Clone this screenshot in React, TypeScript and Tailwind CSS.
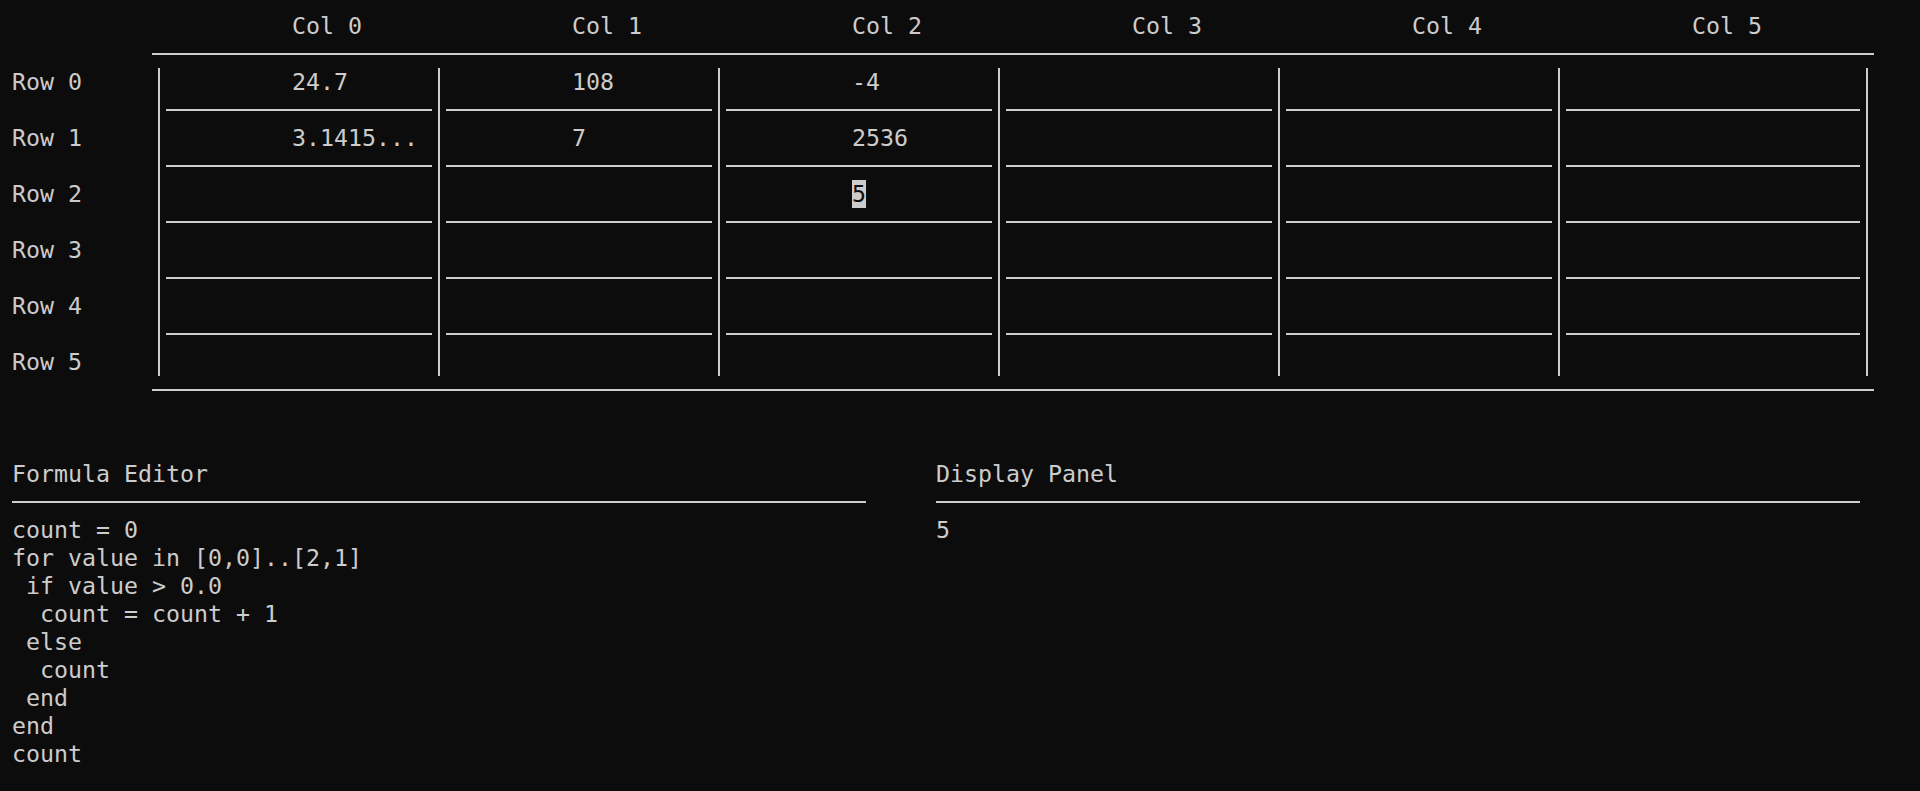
import React from "react";

const HLine = ({ w }: { w: string }) => (
  <div className={`${w} h-[28px] flex items-center shrink-0`}>
    <div className="h-[2px] w-full bg-[#cccccc]" />
  </div>
);

const VBar = () => (
  <div className="w-[14px] h-[28px] flex justify-center shrink-0">
    <div className="w-[2px] h-full bg-[#cccccc]" />
  </div>
);

const values: string[][] = [
  ["24.7", "108", "-4", "", "", ""],
  ["3.1415...", "7", "2536", "", "", ""],
  ["", "", "5", "", "", ""],
  ["", "", "", "", "", ""],
  ["", "", "", "", "", ""],
  ["", "", "", "", "", ""],
];

const code = [
  "count = 0",
  "for value in [0,0]..[2,1]",
  " if value > 0.0",
  "  count = count + 1",
  " else",
  "  count",
  " end",
  "end",
  "count",
];

function DataRow({ r }: { r: number }) {
  return (
    <div className="flex h-[28px]">
      <div className="w-[140px] shrink-0 whitespace-pre">{`Row ${r}`}</div>
      {values[r].map((v, c) => (
        <React.Fragment key={c}>
          <VBar />
          <div
            className={`${c === 5 ? "w-[294px]" : "w-[266px]"} shrink-0 pl-[126px] h-[28px] whitespace-pre`}
          >
            {r === 2 && c === 2 ? (
              <span className="inline-block h-[28px] bg-[#cccccc] text-[#0c0c0c]">{v}</span>
            ) : (
              v
            )}
          </div>
        </React.Fragment>
      ))}
      <VBar />
    </div>
  );
}

function SepRow() {
  return (
    <div className="flex h-[28px]">
      <div className="w-[140px] shrink-0" />
      {[0, 1, 2, 3, 4, 5].map((c) => (
        <React.Fragment key={c}>
          <VBar />
          <HLine w={c === 5 ? "w-[294px]" : "w-[266px]"} />
        </React.Fragment>
      ))}
      <VBar />
    </div>
  );
}

export default function App() {
  return (
    <div className="min-h-screen w-full bg-[#0c0c0c] text-[#cccccc] font-['DejaVu_Sans_Mono','Liberation_Mono',monospace] text-[23.25px] leading-[28px] pl-[12px] pt-[11.5px] overflow-hidden">
      {/* Header */}
      <div className="flex h-[28px] pl-[280px]">
        {[0, 1, 2, 3, 4, 5].map((c) => (
          <div key={c} className="w-[280px] shrink-0 whitespace-pre">{`Col ${c}`}</div>
        ))}
      </div>
      <div className="flex pl-[140px]">
        <HLine w="w-[1722px]" />
      </div>
      {[0, 1, 2, 3, 4, 5].map((r) => (
        <React.Fragment key={r}>
          <DataRow r={r} />
          {r < 5 && <SepRow />}
        </React.Fragment>
      ))}
      <div className="flex pl-[140px]">
        <HLine w="w-[1722px]" />
      </div>
      <div className="h-[56px]" />
      {/* Bottom panels */}
      <div className="flex">
        <div className="w-[924px] shrink-0">
          <div className="h-[28px]">Formula Editor</div>
          <HLine w="w-[854px]" />
          {code.map((l, i) => (
            <div key={i} className="h-[28px] whitespace-pre">{l}</div>
          ))}
        </div>
        <div className="w-[924px] shrink-0">
          <div className="h-[28px]">Display Panel</div>
          <HLine w="w-[924px]" />
          <div className="h-[28px]">5</div>
        </div>
      </div>
    </div>
  );
}
